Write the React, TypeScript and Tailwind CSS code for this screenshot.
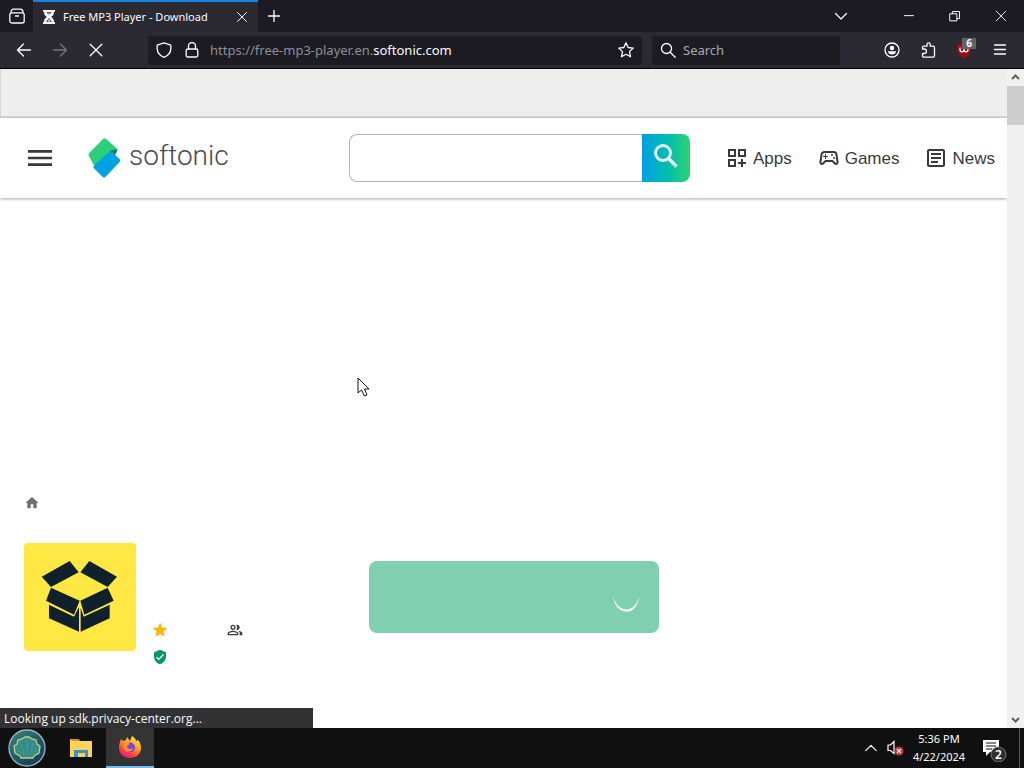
import React from "react";
import {
  MdHome,
  MdMenu,
  MdOutlineArticle,
  MdOutlineDashboardCustomize,
  MdOutlinePeopleAlt,
  MdOutlineSportsEsports,
  MdStar,
  MdVerifiedUser,
} from "react-icons/md";

type GlyphProps = { children: React.ReactNode; className?: string };

function Glyph({ children, className = "size-4" }: GlyphProps) {
  return (
    <svg
      viewBox="0 0 16 16"
      className={className}
      fill="none"
      stroke="currentColor"
      strokeWidth="1.3"
      strokeLinecap="round"
      strokeLinejoin="round"
      aria-hidden="true"
    >
      {children}
    </svg>
  );
}

type IconButtonProps = { label: string; className: string; children: React.ReactNode };

function IconButton({ label, className, children }: IconButtonProps) {
  return (
    <button type="button" aria-label={label} className={`flex shrink-0 items-center justify-center ${className}`}>
      {children}
    </button>
  );
}

function TabStrip() {
  return (
    <div className="flex h-8 items-stretch bg-[#1c1b22]">
      <IconButton label="Recent browsing" className="w-[33px]">
        <Glyph>
          <rect x="0.8" y="4.8" width="14.4" height="10.2" rx="2" />
          <path d="M2 4.5C2 2.500 3 1.200 4.500 1.200h7c1.500 0 2.500 1.300 2.500 3.300M6.500 8h3" />
        </Glyph>
      </IconButton>
      <div className="flex w-[225px] items-center border-t-2 border-[#1383e6] bg-[#2b2a33] pl-2">
        <svg viewBox="0 0 16 16" className="size-4 shrink-0" aria-hidden="true">
          <path d="M2 1h12v2h-1c0 3-1.500 4-3 5 1.500 1 3 2 3 5h1v2H2v-2h1c0-3 1.500-4 3-5-1.500-1-3-2-3-5H2z" fill="#fbfbfe" />
          <path d="M5.500 3.200h5L8 6.500zM8 9l2.800 4H5.200z" fill="#2b2a33" />
          <path d="M6.500 4.500h3L8 6.400zM8 10l1.500 2.500h-3z" fill="#fbfbfe" />
        </svg>
        <span className="flex-1 truncate pl-1.5 text-[11px]">Free MP3 Player - Download</span>
        <IconButton label="Close tab" className="w-8">
          <Glyph className="size-3">
            <path d="M2 2l12 12M14 2L2 14" />
          </Glyph>
        </IconButton>
      </div>
      <IconButton label="New tab" className="w-8">
        <Glyph className="size-3">
          <path d="M8 .7v14.600M.7 8h14.600" strokeWidth="1.800" />
        </Glyph>
      </IconButton>
      <div className="flex-1" />
      <IconButton label="List all tabs" className="mr-[22px] w-[46px]">
        <Glyph>
          <path d="M2.500 5.500L8 11l5.500-5.500" />
        </Glyph>
      </IconButton>
      <IconButton label="Minimize" className="w-[46px]">
        <Glyph className="size-3">
          <path d="M1.500 7.500h13" strokeLinecap="butt" />
        </Glyph>
      </IconButton>
      <IconButton label="Restore" className="w-[46px]">
        <Glyph className="size-3">
          <path d="M1.500 5h9v9.500h-9zM4.500 5V2h9.500v9.500h-3.500" strokeLinejoin="miter" />
        </Glyph>
      </IconButton>
      <IconButton label="Close window" className="w-[46px]">
        <Glyph className="size-3">
          <path d="M1.500 1.500l13 13M14.500 1.500l-13 13" strokeWidth="1.200" />
        </Glyph>
      </IconButton>
    </div>
  );
}

function Toolbar() {
  return (
    <div className="flex h-[37px] items-center border-b border-black bg-[#2b2a33] pl-1.5 pr-1.5">
      <IconButton label="Back" className="h-8 w-9">
        <Glyph>
          <path d="M14.500 8H1.500M7.500 2L1.500 8l6 6" />
        </Glyph>
      </IconButton>
      <IconButton label="Forward" className="h-8 w-9 text-[#75747b]">
        <Glyph>
          <path d="M1.500 8h13M8.500 2l6 6-6 6" />
        </Glyph>
      </IconButton>
      <IconButton label="Stop" className="mr-[34px] h-8 w-9">
        <Glyph>
          <path d="M2.200 2.200l11.600 11.600M13.800 2.200L2.200 13.800" />
        </Glyph>
      </IconButton>
      <div className="flex h-[29px] flex-1 items-center rounded bg-[#1c1b22] pl-2">
        <Glyph>
          <path d="M8 .9l6.800 2.300v3.300c0 4-3 7.300-6.800 8.800C4.200 13.800 1.200 10.500 1.200 6.500V3.200z" />
        </Glyph>
        <Glyph className="ml-3 size-4">
          <rect x="2.200" y="7" width="11.600" height="8" rx="1.500" />
          <path d="M4.500 7V4a3.500 3.500 0 0 1 7 0v3" />
        </Glyph>
        <a
          href="https://free-mp3-player.en.softonic.com"
          className="ml-2.5 flex-1 truncate pt-0.5 text-[13px] text-[#8f8f98]"
        >
          https://free-mp3-player.en.<span className="text-[#fbfbfe]">softonic.com</span>
        </a>
        <IconButton label="Bookmark this page" className="h-7 w-8">
          <Glyph>
            <path d="M8 .9l2.200 4.600 5 .6-3.700 3.500 1 5.200L8 12.300l-4.500 2.500 1-5.200L.8 6.100l5-.6z" />
          </Glyph>
        </IconButton>
      </div>
      <label className="ml-2.5 flex h-[29px] w-[188px] items-center rounded-l bg-[#1c1b22] pl-2">
        <Glyph>
          <circle cx="6.500" cy="6.500" r="5" />
          <path d="M10.200 10.200l5 5" />
        </Glyph>
        <input
          type="text"
          aria-label="Search"
          placeholder="Search"
          className="ml-[7px] w-0 flex-1 bg-transparent pt-0.5 text-[13px] outline-none placeholder:text-[#a9a9b0]"
        />
      </label>
      <div className="ml-[34px] flex">
        <IconButton label="Account" className="h-8 w-9">
          <Glyph>
            <circle cx="8" cy="8" r="7" />
            <circle cx="8" cy="6" r="2.200" fill="currentColor" stroke="none" />
            <path d="M3.800 9.200h8.400c-.4 2-2 3.300-4.200 3.300s-3.800-1.300-4.200-3.300z" fill="currentColor" stroke="none" />
          </Glyph>
        </IconButton>
        <IconButton label="Extensions" className="h-8 w-9">
          <Glyph>
            <path d="M2.500 7V5.500c0-.8.500-1.300 1.300-1.300H7V2.500a1.600 1.600 0 0 1 3.200 0v1.700h3c.8 0 1.300.5 1.300 1.300v8.300c0 .8-.5 1.300-1.300 1.300H3.800c-.8 0-1.300-.5-1.300-1.300V11.500h1.700a2.200 2.200 0 0 0 0-4.500z" />
          </Glyph>
        </IconButton>
        <div className="relative">
          <IconButton label="uBlock Origin" className="h-8 w-9">
            <svg viewBox="0 0 16 16" className="size-4" aria-hidden="true">
              <path d="M8 0l7 2.500V8c0 4-3.500 6.500-7 8-3.500-1.500-7-4-7-8V2.500z" fill="#9b0a12" />
              <path d="M4 5.500v2.300a2 2 0 0 0 4 0V5.500m0 2.300a2 2 0 1 0 2-2" fill="none" stroke="#fff" strokeWidth="1.300" />
            </svg>
          </IconButton>
          <span className="absolute right-1.5 top-1 w-3.5 bg-[#5f6368] text-center text-[10px] font-bold leading-[11px]">6</span>
        </div>
        <IconButton label="Open application menu" className="h-8 w-9">
          <Glyph>
            <path d="M2.500 3h11M2.500 7.500h11M2.500 12h11" />
          </Glyph>
        </IconButton>
      </div>
    </div>
  );
}

function SoftonicLogo() {
  return (
    <a href="#home" className="ml-8 flex items-center text-[#4a4a4d]">
      <svg viewBox="0 0 99 122" className="h-10 w-[33px]" aria-hidden="true">
        <g strokeWidth="14" strokeLinejoin="round">
          <path d="M8 51L50 8l30 27-60 40z" fill="#2bcf78" stroke="#2bcf78" />
          <path d="M66 39l24-5-8 18z" fill="#087a6b" />
          <path d="M68 48l22 21-42 44-25-25z" fill="#02a1e2" stroke="#02a1e2" />
        </g>
      </svg>
      <span className="ml-2 pb-1 font-[Roboto,sans-serif] text-[28px] font-light leading-8">softonic</span>
    </a>
  );
}

const sections = [
  { name: "Apps", Icon: MdOutlineDashboardCustomize },
  { name: "Games", Icon: MdOutlineSportsEsports },
  { name: "News", Icon: MdOutlineArticle },
];

function SiteHeader() {
  return (
    <header className="flex h-20 shrink-0 items-center bg-white pl-6 pr-3 shadow-[0_1px_3px_rgba(0,0,0,0.35)]">
      <button type="button" aria-label="Menu">
        <MdMenu size={32} />
      </button>
      <SoftonicLogo />
      <form className="ml-auto flex h-12 w-[341px]">
        <input
          type="text"
          aria-label="Search Softonic"
          className="w-0 flex-1 rounded-l-lg border border-r-0 border-[#b5b5b8] px-3 outline-none"
        />
        <button
          type="button"
          aria-label="Search"
          className="flex w-12 justify-center rounded-r-lg bg-linear-to-r from-[#009fe3] to-[#2ad36f] pt-2.5 text-[#eafcff]"
        >
          <svg viewBox="0 0 24 24" className="size-6" fill="none" stroke="currentColor" aria-hidden="true">
            <circle cx="9" cy="9" r="7.500" strokeWidth="2.800" />
            <path d="M14.500 14.500l8 8" strokeWidth="3.300" />
          </svg>
        </button>
      </form>
      <nav className="ml-[35px] flex gap-[25px] text-[17px]">
        {sections.map(({ name, Icon }) => (
          <a key={name} href={`#${name}`} className="flex items-center gap-1">
            <Icon size={24} />
            <span className="pt-0.5">{name}</span>
          </a>
        ))}
      </nav>
    </header>
  );
}

function BoxArt() {
  return (
    <svg viewBox="0 0 336 324" className="h-[108px] w-28 rounded bg-[#ffe843]" role="img" aria-label="Open box">
      <g fill="#10212b">
        <path d="M53 101l84-47 27 34-83 44zM196 54l83 47-28 31-82-44z" />
        <path d="M81 134l86 39-17 42-84-42zM251 134l18 39-88 42-12-42z" />
        <path d="M75 185l75 36 15-29v74l-90-40zM257 185l-78 36-9-27v72l87-40z" />
      </g>
    </svg>
  );
}

function AppSummary() {
  return (
    <main className="px-6 pt-[297px] text-[#3a3a3d]">
      <a href="#home" aria-label="Home" className="inline-block align-top text-[#707073]">
        <MdHome size={16} />
      </a>
      <div className="mt-6 grid grid-cols-[329px_290px] gap-x-4">
        <section className="flex gap-4">
          <BoxArt />
          <div className="grid grid-cols-[75px_16px] content-start items-center gap-y-2.5 pt-[78px]">
            <MdStar size={18} className="-ml-px text-[#ffb60a]" />
            <MdOutlinePeopleAlt size={16} />
            <MdVerifiedUser size={16} className="text-[#079669]" />
          </div>
        </section>
        <button
          type="button"
          aria-label="Loading download"
          className="mt-[18px] flex h-[72px] items-center justify-end rounded-lg bg-[#80cfb0] pr-[18px]"
        >
          <svg viewBox="0 0 30 30" className="size-[30px]" aria-hidden="true">
            <path d="M2 13C3 34 27 36 28 14C25 32 5 32 2 13z" fill="#fff" />
          </svg>
        </button>
      </div>
    </main>
  );
}

function Scrollbar() {
  return (
    <div className="flex w-[17px] shrink-0 flex-col items-center bg-[#f0f0f0] text-[#606060]" aria-hidden="true">
      <svg viewBox="0 0 17 17" className="size-[17px]">
        <path d="M5 10l3.500-3.500L12 10" fill="none" stroke="currentColor" strokeWidth="2" />
      </svg>
      <div className="h-[39px] w-full bg-[#cdcdcd]" />
      <div className="flex-1" />
      <svg viewBox="0 0 17 17" className="size-[17px]">
        <path d="M5 7l3.500 3.500L12 7" fill="none" stroke="currentColor" strokeWidth="2" />
      </svg>
    </div>
  );
}

function Taskbar() {
  return (
    <footer className="flex h-10 shrink-0 items-stretch bg-[#101010] text-white">
      <IconButton label="Start" className="ml-2 w-[38px]">
        <svg viewBox="0 0 38 38" className="size-[38px]">
          <defs>
            <linearGradient id="orb" x2="0.800" y2="1">
              <stop offset="0" stopColor="#3e817f" />
              <stop offset="1" stopColor="#123a58" />
            </linearGradient>
          </defs>
          <circle cx="19" cy="19" r="18" fill="url(#orb)" stroke="#98b8c1" strokeWidth="1.300" />
          <path d="M12 27l-5-3-1-7 3-2 1-4 4-1 3-2h4l3 2 4 1 1 4 3 2-1 7-5 3-1 2H13z" fill="#328b85" stroke="#c9cd82" strokeWidth="1.300" />
          <path d="M19 26V9M16 26l-4-14M22 26l4-14M13 25l-5-8M25 25l5-8" stroke="#4fa096" strokeWidth="0.800" fill="none" />
        </svg>
      </IconButton>
      <IconButton label="File Explorer" className="ml-[11px] mr-px w-12">
        <svg viewBox="0 0 22 20" className="h-5 w-[22px]">
          <path d="M0 1h8l2 2h12v16H0z" fill="#ffd45c" />
          <path d="M1 1h7l2 2H1z" fill="#e78d22" />
          <path d="M4 12h14v7h-3v-4H8v4H4z" fill="#3b91cf" />
        </svg>
      </IconButton>
      <IconButton label="Firefox" className="w-12 border-b-2 border-[#76b9ed] bg-[#343434]">
        <svg viewBox="0 0 24 24" className="size-6">
          <defs>
            <linearGradient id="flame" x1="0.800" y1="0" x2="0.250" y2="1">
              <stop offset="0" stopColor="#fff34f" />
              <stop offset="0.450" stopColor="#ff981e" />
              <stop offset="0.750" stopColor="#ff3d45" />
              <stop offset="1" stopColor="#e31587" />
            </linearGradient>
          </defs>
          <path d="M3 4l2 2 3-1 1-3 3 4 2-5c2 1 4 3 4 5l2-1c2 2 3 5 3 8 0 6-5 10-11 10S1 19 1 13c0-4 1-6 2-9z" fill="url(#flame)" />
          <circle cx="12" cy="12.500" r="5" fill="#7b42df" />
          <path d="M5 9c2-2 5-2 7 0l-3 2c0 3 3 4 6 2-1 4-7 5-9 1z" fill="#ff9428" />
        </svg>
      </IconButton>
      <div className="flex-1" />
      <IconButton label="Show hidden icons" className="w-6">
        <Glyph className="size-3.5">
          <path d="M2 11l6-6 6 6" />
        </Glyph>
      </IconButton>
      <IconButton label="Volume muted" className="ml-1 w-[17px]">
        <svg viewBox="0 0 17 16" className="h-4 w-[17px]">
          <path d="M1 5h2.500L7 1.500v12L3.500 10.500H1z" fill="none" stroke="#fff" strokeWidth="1.200" />
          <circle cx="12" cy="11" r="4.500" fill="#c9303b" />
          <path d="M10 9l4 4M14 9l-4 4" stroke="#fff" strokeWidth="1.200" />
        </svg>
      </IconButton>
      <div className="flex w-[70px] flex-col items-center justify-center text-[11px] leading-[18px]">
        <span>5:36 PM</span>
        <span>4/22/2024</span>
      </div>
      <IconButton label="2 notifications" className="ml-1.5 w-7">
        <svg viewBox="0 0 28 28" className="size-7">
          <path d="M3 6h16v12h-9l-4 4v-4H3z" fill="#fff" />
          <path d="M6 9h10M6 12h10M6 15h6" stroke="#111" strokeWidth="1" />
          <circle cx="18.500" cy="20.500" r="7.500" fill="#303030" stroke="#777" />
          <text x="18.500" y="25" textAnchor="middle" fontSize="12" fontWeight="600" fill="#fff">
            2
          </text>
        </svg>
      </IconButton>
      <div className="ml-[11px] mr-1 border-l border-[#555]" />
    </footer>
  );
}

export default function App() {
  return (
    <div className="flex h-screen flex-col overflow-hidden font-['Noto_Sans',sans-serif] text-[#fbfbfe]">
      <TabStrip />
      <Toolbar />
      <div className="relative flex min-h-0 flex-1 bg-white font-['Liberation_Sans',sans-serif] text-[#3a3a3d]">
        <div className="min-w-0 flex-1 overflow-hidden">
          <div className="h-[49px] border-b-2 border-l border-[#d6d6d6] bg-[#eeeeee]" />
          <SiteHeader />
          <AppSummary />
        </div>
        <Scrollbar />
        <div className="absolute bottom-0 left-0 w-[313px] bg-[#323234] px-1 pt-0.5 font-['Open_Sans',sans-serif] text-xs leading-[18px] text-[#fbfbfe]">
          Looking up sdk.privacy-center.org...
        </div>
        <svg viewBox="0 0 13 20" className="absolute left-[357px] top-[308px] h-5 w-[13px]" aria-hidden="true">
          <path d="M1 1v15l3.500-3 3 6 2.500-1-2.500-6H12z" fill="#fff" stroke="#111" />
        </svg>
      </div>
      <Taskbar />
    </div>
  );
}
